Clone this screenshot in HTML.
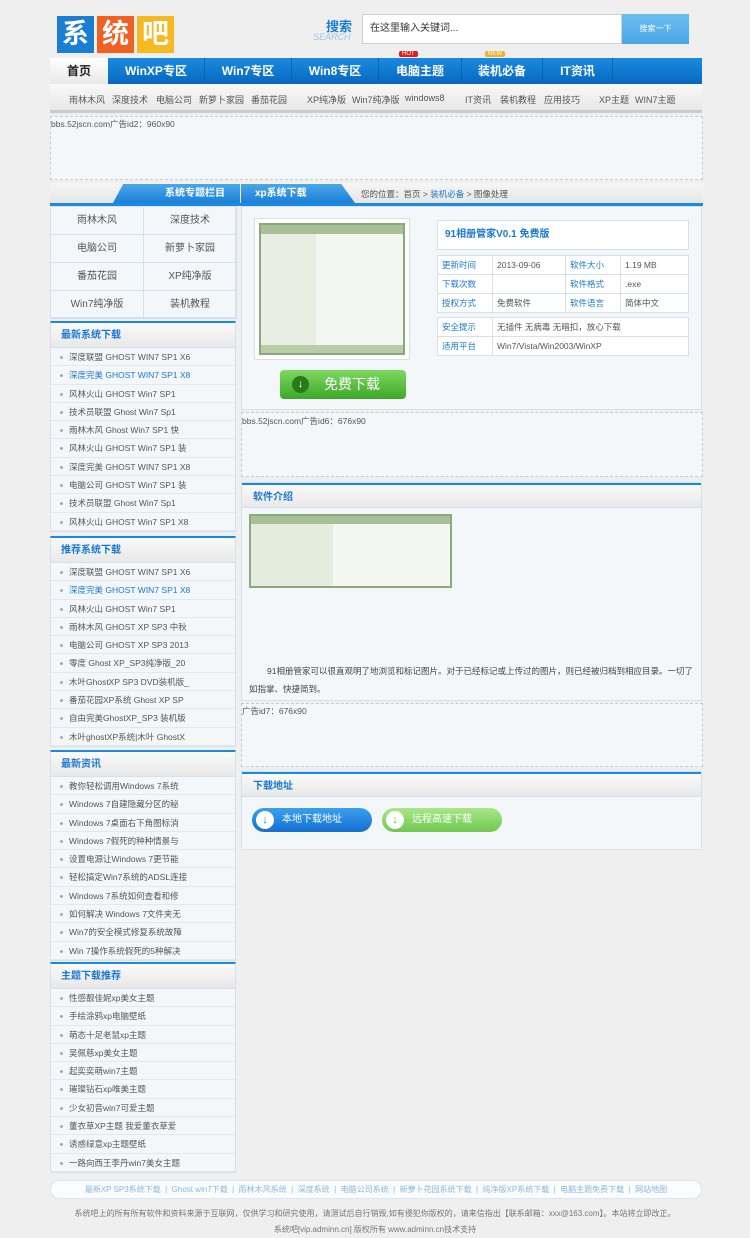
<!DOCTYPE html>
<html><head><meta charset="utf-8"><style>
*{margin:0;padding:0;box-sizing:border-box}
body{width:750px;height:1238px;background:#efefef;font-family:"Liberation Sans","Noto Sans CJK SC",sans-serif;font-size:9px;color:#555;position:relative;overflow:hidden}
.a{position:absolute}
.logo span{display:inline-block;width:37px;height:37px;color:#fff;font-size:27px;font-weight:bold;text-align:center;line-height:37px;margin-right:3px}
.nav{left:50px;top:58px;width:652px;height:26px;background:linear-gradient(#1a8ae0,#0868c0)}
.nav div{position:absolute;top:0;height:26px;line-height:26px;color:#fff;font-weight:bold;font-size:12px;text-align:center}
.sub{left:50px;top:84px;width:652px;height:29px;background:linear-gradient(#f8f8f8,#e8e8e8);border-bottom:3px solid #ccc}
.sub span{position:absolute;top:9px;font-size:9px;color:#555}
.ad{border:1px dashed #ccc;background:#f4f7fa}
.grid{left:50px;top:206px;width:186px;height:112px;background:#f4f7fa;border:1px solid #d6e0ea}
.grid div{position:absolute;width:93px;height:28px;line-height:28px;text-align:center;font-size:10px;color:#555;border-right:1px solid #d6e0ea;border-bottom:1px solid #d6e0ea}
.sec{left:50px;width:186px;background:#f4f7fa;border:1px solid #d6e0ea;border-top:2px solid #1a8ae0}
.sec h3{height:25px;line-height:25px;padding-left:10px;font-size:10px;color:#1a78d0;background:linear-gradient(#fafafa,#e8e8e8);border-bottom:1px solid #d6e0ea}
.sec li{list-style:none;height:18.3px;line-height:18px;padding-left:18px;position:relative;border-bottom:1px solid #e2e8ee;font-size:8.5px;white-space:nowrap;overflow:hidden}
.sec li:before{content:"";position:absolute;left:9px;top:8px;width:3px;height:3px;background:#aaa;border-radius:2px}
.box{background:#f4f7fa;border:1px solid #d6e0ea}
.hd{height:25px;line-height:25px;padding-left:11px;font-size:10px;font-weight:bold;color:#1a78d0;background:linear-gradient(#fafafa,#e8e8e8);border-top:2px solid #1a8ae0;border-bottom:1px solid #d6e0ea}
table{border-collapse:collapse;background:#fff;font-size:8.5px}
td{border:1px solid #d6e0ea;height:19px;padding-left:4px}
td.k{color:#1a78d0;width:55px}
.btn{border-radius:13px;height:24px;color:#fff;font-size:10px;line-height:24px;padding-left:30px}
.btn i{position:absolute;left:4px;top:3px;width:18px;height:18px;border-radius:9px;background:#fff;font-style:normal;text-align:center;line-height:18px;font-weight:bold;font-size:11px}
</style></head><body>
<div class="a logo" style="left:57px;top:10px"><span style="background:#1a7fd4">系</span><span style="background:#f06020;margin-top:6px">统</span><span style="background:#f8b820;color:#fff">吧</span></div>
<div class="a" style="left:326px;top:16px;font-size:13px;font-weight:bold;color:#1a7fd4">搜索</div>
<div class="a" style="left:313px;top:32px;font-size:9px;color:#9cc4e8;font-style:italic">SEARCH</div>
<div class="a" style="left:362px;top:14px;width:260px;height:30px;background:#fff;border:1px solid #d0d0d0;font-size:10px;color:#333;line-height:28px;padding-left:7px">在这里输入关键词...</div>
<div class="a" style="left:622px;top:14px;width:67px;height:30px;background:linear-gradient(#6cbef0,#4aa6e8);color:#fff;font-size:8px;text-align:center;line-height:30px">搜索一下</div>
<div class="a nav">
<div style="left:0;width:58px;background:linear-gradient(#fff,#e8e8e8);color:#222">首页</div>
<div style="left:58px;width:96px">WinXP专区</div><div style="left:154px;width:87px;border-left:1px solid #0a62b0">Win7专区</div>
<div style="left:241px;width:87px;border-left:1px solid #0a62b0">Win8专区</div><div style="left:328px;width:83px;border-left:1px solid #0a62b0">电脑主题</div>
<div style="left:411px;width:81px;border-left:1px solid #0a62b0">装机必备</div><div style="left:492px;width:71px;border-left:1px solid #0a62b0;border-right:1px solid #0a62b0">IT资讯</div>
</div>
<div class="a" style="left:399px;top:51px;background:#e02020;color:#fff;font-size:6px;padding:0 3px;border-radius:2px">HOT</div>
<div class="a" style="left:485px;top:51px;background:#f0b030;color:#fff;font-size:6px;padding:0 3px;border-radius:2px">NEW</div>
<div class="a sub">
<span style="left:19px">雨林木风</span><span style="left:62px">深度技术</span><span style="left:106px">电脑公司</span><span style="left:149px">新萝卜家园</span><span style="left:201px">番茄花园</span>
<span style="left:257px">XP纯净版</span><span style="left:302px">Win7纯净版</span><span style="left:355px">windows8</span>
<span style="left:415px">IT资讯</span><span style="left:450px">装机教程</span><span style="left:494px">应用技巧</span><span style="left:549px">XP主题</span><span style="left:585px">WIN7主题</span></div>
<div class="a ad" style="left:50px;top:116px;width:653px;height:64px"><span style="position:absolute;left:0;top:1px;font-size:8.5px">bbs.52jscn.com广告id2：960x90</span></div>
<div class="a" style="left:50px;top:183px;width:653px;height:20px;background:linear-gradient(#f6f6f6,#e6e6e6)"></div>
<div class="a" style="left:50px;top:203px;width:653px;height:3px;background:#1a8ae0"></div>
<div class="a" style="left:113px;top:184px;width:127px;height:19px;background:linear-gradient(#4aa6e8,#1a80d8);clip-path:polygon(8% 0,100% 0,100% 100%,0 100%);color:#fff;font-weight:bold;font-size:10px;line-height:19px;padding-left:52px">系统专题栏目</div>
<div class="a" style="left:241px;top:184px;width:114px;height:19px;background:linear-gradient(#4aa6e8,#1a80d8);clip-path:polygon(0 0,88% 0,100% 100%,0 100%);color:#fff;font-weight:bold;font-size:10px;line-height:19px;padding-left:14px">xp系统下载</div>
<div class="a" style="left:361px;top:188px;font-size:8.5px;color:#555">您的位置：首页 &gt; <span style="color:#1a78d0">装机必备</span> &gt; 图像处理</div>
<div class="a grid">
<div style="left:0;top:0">雨林木风</div><div style="left:93px;top:0">深度技术</div>
<div style="left:0;top:28px">电脑公司</div><div style="left:93px;top:28px">新萝卜家园</div>
<div style="left:0;top:56px">番茄花园</div><div style="left:93px;top:56px">XP纯净版</div>
<div style="left:0;top:84px">Win7纯净版</div><div style="left:93px;top:84px">装机教程</div></div>
<div class="a sec" style="top:321px"><h3>最新系统下载</h3><ul>
<li>深度联盟 GHOST WIN7 SP1 X6</li><li style="color:#1a78d0">深度完美 GHOST WIN7 SP1 X8</li><li>风林火山 GHOST Win7 SP1</li><li>技术员联盟 Ghost Win7 Sp1</li><li>雨林木风 Ghost Win7 SP1 快</li><li>风林火山 GHOST Win7 SP1 装</li><li>深度完美 GHOST WIN7 SP1 X8</li><li>电脑公司 GHOST Win7 SP1 装</li><li>技术员联盟 Ghost Win7 Sp1</li><li>风林火山 GHOST Win7 SP1 X8</li></ul></div>
<div class="a sec" style="top:536px"><h3>推荐系统下载</h3><ul>
<li>深度联盟 GHOST WIN7 SP1 X6</li><li style="color:#1a78d0">深度完美 GHOST WIN7 SP1 X8</li><li>风林火山 GHOST Win7 SP1</li><li>雨林木风 GHOST XP SP3 中秋</li><li>电脑公司 GHOST XP SP3 2013</li><li>零度 Ghost XP_SP3纯净版_20</li><li>木叶GhostXP SP3 DVD装机版_</li><li>番茄花园XP系统 Ghost XP SP</li><li>自由完美GhostXP_SP3 装机版</li><li>木叶ghostXP系统|木叶 GhostX</li></ul></div>
<div class="a sec" style="top:750px"><h3>最新资讯</h3><ul>
<li>教你轻松调用Windows 7系统</li><li>Windows 7自建隐藏分区的秘</li><li>Windows 7桌面右下角图标消</li><li>Windows 7假死的种种情景与</li><li>设置电源让Windows 7更节能</li><li>轻松搞定Win7系统的ADSL连接</li><li>Windows 7系统如何查看和修</li><li>如何解决 Windows 7文件夹无</li><li>Win7的安全模式修复系统故障</li><li>Win 7操作系统假死的5种解决</li></ul></div>
<div class="a sec" style="top:962px"><h3>主题下载推荐</h3><ul>
<li>性感靓佳妮xp美女主题</li><li>手绘涂鸦xp电脑壁纸</li><li>萌态十足老鼠xp主题</li><li>吴佩慈xp美女主题</li><li>起奕奕萌win7主题</li><li>璀璨钻石xp唯美主题</li><li>少女初音win7可爱主题</li><li>董衣草XP主题 我爱董衣草爱</li><li>诱惑绿意xp主题壁纸</li><li>一路向西王李丹win7美女主题</li></ul></div>
<div class="a box" style="left:241px;top:206px;width:461px;height:204px"></div>
<div class="a" style="left:254px;top:218px;width:156px;height:142px;background:#fff;border:1px solid #ddd;padding:4px">
<div style="width:100%;height:100%;background:#dfe8d8;border:2px solid #8aa878;position:relative"><div style="height:9px;background:#a8c098"></div><div style="position:absolute;left:0;top:9px;width:55px;bottom:8px;background:#e8eee2"></div><div style="position:absolute;left:55px;top:9px;right:0;bottom:8px;background:#f4f6f2"></div><div style="position:absolute;left:0;bottom:0;right:0;height:8px;background:#b8cca8"></div></div></div>
<div class="a" style="left:437px;top:220px;width:252px;height:30px;background:#fff;border:1px solid #d6e0ea;color:#1a78d0;font-weight:bold;font-size:10px;line-height:28px;padding-left:7px">91相册管家V0.1 免费版</div>
<table class="a" style="left:437px;top:255px;width:252px">
<tr><td class="k">更新时间</td><td style="width:73px">2013-09-06</td><td class="k">软件大小</td><td>1.19 MB</td></tr>
<tr><td class="k">下载次数</td><td></td><td class="k">软件格式</td><td>.exe</td></tr>
<tr><td class="k">授权方式</td><td>免费软件</td><td class="k">软件语言</td><td>简体中文</td></tr></table>
<table class="a" style="left:437px;top:317px;width:252px">
<tr><td class="k">安全提示</td><td>无插件 无病毒 无暗扣，放心下载</td></tr>
<tr><td class="k">适用平台</td><td>Win7/Vista/Win2003/WinXP</td></tr></table>
<div class="a" style="left:280px;top:370px;width:126px;height:29px;border-radius:4px;background:linear-gradient(#7ed860,#3ca828);color:#fff;font-size:14px;line-height:29px;padding-left:44px">免费下载<span style="position:absolute;left:12px;top:6px;width:17px;height:17px;border-radius:9px;background:#2a7a18;font-size:11px;line-height:17px;text-align:center;font-weight:bold">↓</span></div>
<div class="a ad" style="left:241px;top:412px;width:462px;height:65px"><span style="position:absolute;left:0;top:2px;font-size:8.5px">bbs.52jscn.com广告id6：676x90</span></div>
<div class="a box" style="left:241px;top:482px;width:461px;height:219px"><div class="hd">软件介绍</div></div>
<div class="a" style="left:249px;top:514px;width:203px;height:74px;background:#f4f6f2;border:2px solid #8aa878"><div style="height:8px;background:#a8c098"></div><div style="position:absolute;left:0;top:8px;width:82px;bottom:0;background:#e4ecde"></div></div>
<div class="a" style="left:249px;top:662px;width:445px;font-size:8.5px;line-height:18px;text-indent:18px;color:#444">91相册管家可以很直观明了地浏览和标记图片。对于已经标记或上传过的图片，则已经被归档到相应目录。一切了如指掌、快捷简到。</div>
<div class="a ad" style="left:241px;top:703px;width:462px;height:64px"><span style="position:absolute;left:0;top:1px;font-size:8.5px">广告id7：676x90</span></div>
<div class="a box" style="left:241px;top:771px;width:461px;height:79px"><div class="hd">下载地址</div></div>
<div class="a btn" style="left:252px;top:808px;width:120px;background:linear-gradient(#3aa0f0,#1470d0)"><i style="color:#1a80d8">↓</i>本地下载地址</div>
<div class="a btn" style="left:382px;top:808px;width:120px;background:linear-gradient(#a8e888,#70c850)"><i style="color:#5ab838">↓</i>远程高速下载</div>
<div class="a" style="left:50px;top:1180px;width:652px;height:19px;border-radius:10px;background:#fafcfe;border:1px solid #dde6ee;color:#8ab8e0;font-size:8px;line-height:17px;text-align:center;white-space:nowrap">最新XP SP3系统下载 &nbsp;| &nbsp;Ghost win7下载 &nbsp;| &nbsp;雨林木风系统 &nbsp;| &nbsp;深度系统 &nbsp;| &nbsp;电脑公司系统 &nbsp;| &nbsp;新萝卜花园系统下载 &nbsp;| &nbsp;纯净版XP系统下载 &nbsp;| &nbsp;电脑主题免费下载 &nbsp;| &nbsp;网站地图</div>
<div class="a" style="left:0;top:1208px;width:750px;text-align:center;font-size:8px;color:#777">系统吧上的所有所有软件和资料来源于互联网，仅供学习和研究使用，请测试后自行销毁,如有侵犯你版权的，请来信指出【联系邮箱：xxx@163.com】。本站将立即改正。</div>
<div class="a" style="left:0;top:1224px;width:750px;text-align:center;font-size:8px;color:#777">系统吧[vip.adminn.cn] 版权所有 www.adminn.cn技术支持</div>
</body></html>
